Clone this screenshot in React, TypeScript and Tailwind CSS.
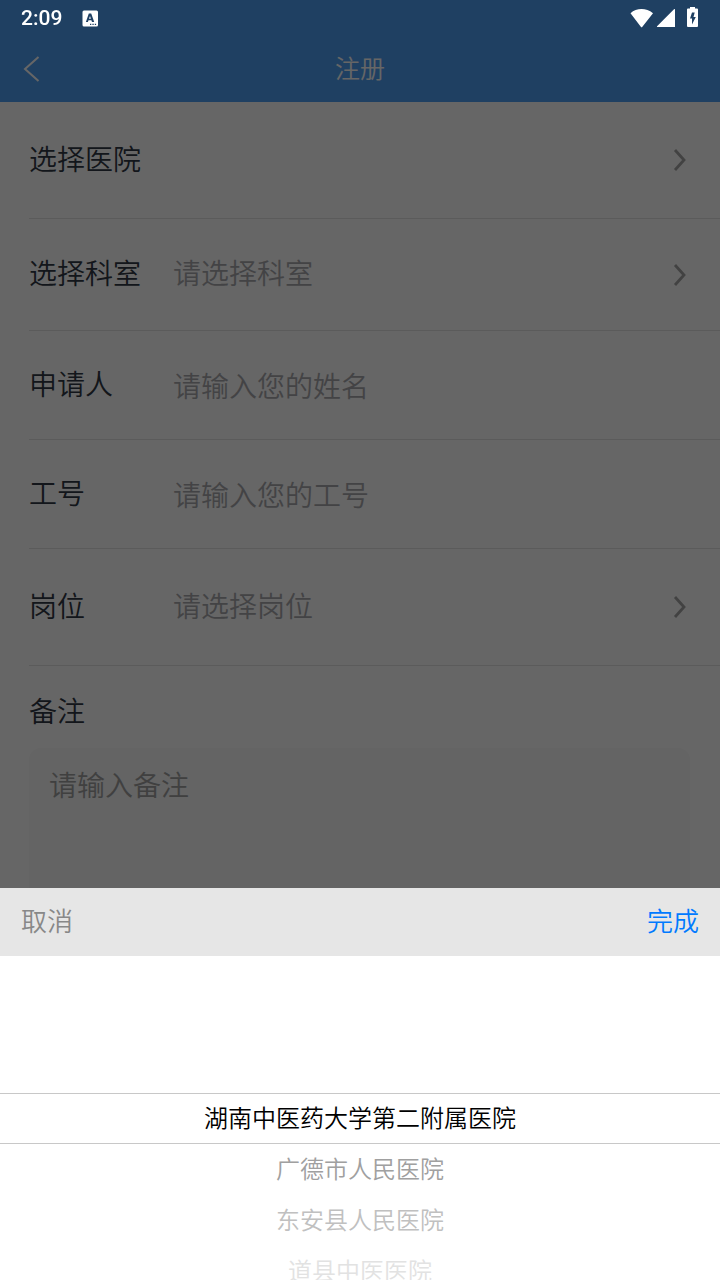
import React, { useState } from 'react';

const hospitals = [
  '湖南中医药大学第二附属医院',
  '广德市人民医院',
  '东安县人民医院',
  '道县中医医院',
];

const itemColors = ['text-black', 'text-[#a0a0a0]', 'text-[#c0c0c0]', 'text-[#e2e2e2]'];

const StatusBar = () => {
  return (
    <div className="fixed inset-x-0 top-0 z-30 flex h-9 items-center justify-between pl-[21px] pr-[22px] text-white">
      <div className="flex items-center gap-5">
        <span className="font-[Roboto,sans-serif] text-[21px] font-medium leading-9">2:09</span>
        <svg width="16" height="17" viewBox="0 0 16 17" aria-hidden="true">
          <rect x="0.5" y="0.5" width="15.5" height="16" rx="1.5" fill="currentColor" />
          <path
            fill="#1f4063"
            fillRule="evenodd"
            d="M6.8 3.500h2.400l3 8.500H10L9.400 10.200H6.500L5.900 12H3.900zM8 5.900 7 8.800h1.900z"
          />
          <path fill="#1f4063" d="M8 13.700h1.300V15H8zM10.400 13.700h1.300V15h-1.300zM12.800 13.700h1.300V15h-1.300z" />
        </svg>
      </div>
      <svg width="68" height="22" viewBox="0 0 68 22" fill="currentColor" aria-hidden="true">
        <path d="M0.500 6.200C3.500 3.400 7.500 2 11.500 2s8 1.400 11.500 4.200L12.400 19.700a1 1 0 0 1-1.600 0z" />
        <path d="M45 2.800V20H27.800a.6.6 0 0 1-.5-1.100L44 2.300c.5-.4 1-.2 1 .5z" />
        <path
          fillRule="evenodd"
          d="M60 0h5v1.500h2a1 1 0 0 1 1 1V19a1 1 0 0 1-1 1h-9a1 1 0 0 1-1-1V2.500a1 1 0 0 1 1-1h2zM62 5.500 60 11.500h2v6l3.800-7.500h-2.300l1.200-4.500z"
        />
      </svg>
    </div>
  );
};

const Arrow = () => (
  <svg className="mr-8 shrink-0 text-[#a6a6a6]" width="16" height="24" viewBox="0 0 16 24" fill="none" aria-hidden="true">
    <path d="M3 2 12 12 3 22" stroke="currentColor" strokeWidth="2.800" />
  </svg>
);

const SelectRow = ({ id, label, placeholder, height }: {
  id: string;
  label: string;
  placeholder?: string;
  height: string;
}) => {
  return (
    <div className={`flex items-center border-b border-[#e4e4e4] ${height}`}>
      <span id={id} className="w-36 shrink-0 pb-[5px] text-[#303844]">{label}</span>
      <button type="button" aria-labelledby={id} className="flex flex-1 items-center justify-between text-left">
        <span className="pb-[5px] text-[#a9a9ad]">{placeholder}</span>
        <Arrow />
      </button>
    </div>
  );
};

const InputRow = ({ id, label, placeholder }: {
  id: string;
  label: string;
  placeholder: string;
}) => {
  const [value, setValue] = useState('');

  return (
    <div className="flex h-[109px] items-center border-b border-[#e4e4e4]">
      <label htmlFor={id} className="w-36 shrink-0 pb-[5px] text-[#303844]">{label}</label>
      <input
        id={id}
        type="text"
        className="min-w-0 flex-1 bg-transparent outline-none placeholder:text-[#a9a9ad]"
        placeholder={placeholder}
        value={value}
        onChange={(e) => setValue(e.target.value)}
      />
    </div>
  );
};

const Picker = () => {
  const [selected, setSelected] = useState(0);

  return (
    <div className="fixed inset-x-0 bottom-0 z-20 bg-white">
      <div className="flex h-[68px] items-center justify-between bg-[#e6e6e6] px-[21px] pb-[5px] text-[26px]">
        <button type="button" className="text-[#888888]">取消</button>
        <button type="button" className="text-[#007aff]">完成</button>
      </div>
      <div className="h-[324px] overflow-hidden pt-[137px]">
        <ul role="listbox" aria-label="选择医院" className="text-2xl">
          {hospitals.map((name, index) => (
            <li
              key={name}
              role="option"
              aria-selected={index === selected}
              onClick={() => setSelected(index)}
              className={`flex h-[51px] items-center justify-center pb-[3px] ${itemColors[Math.abs(index - selected)]} ${index === selected ? 'border-y border-[#c8c8c8]' : ''}`}
            >
              {name}
            </li>
          ))}
        </ul>
      </div>
    </div>
  );
};

export default function App() {
  const [remark, setRemark] = useState('');

  return (
    <div className="h-screen overflow-hidden bg-white font-['Noto_Sans_CJK_SC',sans-serif] font-[350]">
      <StatusBar />

      <header className="bg-[#4ea0f5] pt-9 text-white">
        <div className="grid h-[66px] grid-cols-[64px_1fr_64px] items-center">
          <button type="button" aria-label="返回" className="pl-[23px]">
            <svg width="18" height="28" viewBox="0 0 18 28" fill="none" aria-hidden="true">
              <path d="M15.500 2 2 14l13.500 12" stroke="currentColor" strokeWidth="2" />
            </svg>
          </button>
          <h1 className="pb-[3px] text-center text-[25px] font-[350]">注册</h1>
        </div>
      </header>

      <form className="pl-[29px] text-[28px] leading-10">
        <SelectRow id="hospital" label="选择医院" height="h-[117px]" />
        <SelectRow id="department" label="选择科室" placeholder="请选择科室" height="h-[112px]" />
        <InputRow id="applicant" label="申请人" placeholder="请输入您的姓名" />
        <InputRow id="job-number" label="工号" placeholder="请输入您的工号" />
        <SelectRow id="post" label="岗位" placeholder="请选择岗位" height="h-[117px]" />
        <div className="pr-[30px] pt-6">
          <label htmlFor="remark" className="block text-[#303844]">备注</label>
          <textarea
            id="remark"
            className="mt-[18px] block h-60 w-full resize-none rounded-xl bg-[#f9f9f9] px-5 py-4 outline-none placeholder:text-[#a0a0a0]"
            placeholder="请输入备注"
            value={remark}
            onChange={(e) => setRemark(e.target.value)}
          />
        </div>
      </form>

      <div className="fixed inset-0 z-10 bg-black/60" />
      <Picker />
    </div>
  );
}
